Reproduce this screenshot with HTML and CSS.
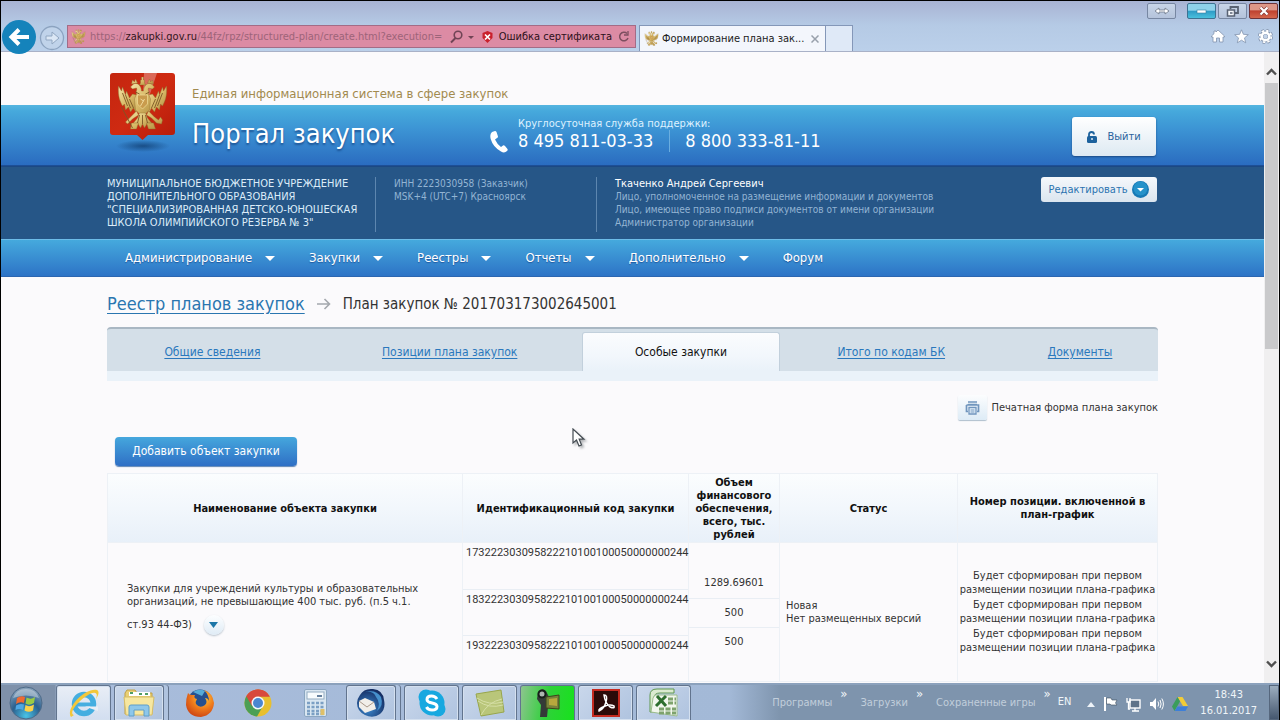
FILE: index.html
```html
<!DOCTYPE html>
<html lang="ru">
<head>
<meta charset="utf-8">
<title>Формирование плана закупок</title>
<link rel="stylesheet" href="styles.css">
</head>
<body>
<svg class="defs" width="0" height="0" aria-hidden="true">
  <defs>
    <linearGradient id="gold" x1="0" y1="0" x2="1" y2="1"><stop offset="0" stop-color="#f3e3a6"/><stop offset=".5" stop-color="#d9bb69"/><stop offset="1" stop-color="#b08a3c"/></linearGradient>
    <linearGradient id="red" x1="0" y1="0" x2="1" y2="1"><stop offset="0" stop-color="#c4260f"/><stop offset=".5" stop-color="#cf2a12"/><stop offset="1" stop-color="#b51c0a"/></linearGradient>
    <radialGradient id="orb" cx=".5" cy=".9" r=".9"><stop offset="0" stop-color="#49c3e6"/><stop offset=".5" stop-color="#2a608f"/><stop offset="1" stop-color="#8fa6bd"/></radialGradient>
    <radialGradient id="bird" cx=".4" cy=".7" r=".7"><stop offset="0" stop-color="#3c8ad0"/><stop offset="1" stop-color="#142c62"/></radialGradient>
    <radialGradient id="fox" cx=".6" cy=".3" r=".8"><stop offset="0" stop-color="#ffcf3a"/><stop offset=".5" stop-color="#ee7a1c"/><stop offset="1" stop-color="#c63a12"/></radialGradient>
    <radialGradient id="shade"><stop offset="0" stop-color="#103d70" stop-opacity=".75"/><stop offset="1" stop-color="#103d70" stop-opacity="0"/></radialGradient>
    <symbol id="eagle" viewBox="0 0 50 54">
      <g fill="url(#gold)" stroke="#8c6a2c" stroke-width=".4">
        <path d="M19 18 15 17 12 21 9 14 8 18 5 10 4 14 1 9C0 20 3 25 5 29L7 27 8 33 11 30 13 35 16 31 18 35 21 31Z"/>
        <path d="M31 18 35 17 38 21 41 14 42 18 45 10 46 14 49 9C50 20 47 25 45 29L43 27 42 33 39 30 37 35 34 31 32 35 29 31Z"/>
        <path d="M19 17C18 14 20 13 19 11L15 12 13 10 16 7C20 5 24 9 24 14L26 14C26 9 30 5 34 7L37 10 35 12 31 11C30 13 32 14 31 17L33 22 32 33 27 38 23 38 18 33 17 22Z"/>
        <path d="M22 36 28 36 30 41 35 47 30 46 27 51 25 47 23 51 20 46 15 47 20 41Z"/>
        <path d="M23 6V3H24V0H26V3H27V6L28 8H22ZM14 7 15 3 17 5 18 2 20 6ZM30 6 32 2 33 5 35 3 36 7Z"/>
        <path d="M19 34 12 41 8 45 10 47 15 42 21 38ZM31 34 37 40 41 43 43 40 45 43 44 47 39 46 34 41 29 38ZM14 46H21L19 52H13ZM29 46H36L38 52H31Z"/>
      </g>
      <path d="M20 18H30V27L25 32 20 27Z" fill="#c99b4d" stroke="#f0dc9a" stroke-width=".7"/>
      <path d="M5 16 10 29M8 18 13 31M12 22 16 31M45 16 40 29M42 18 37 31M38 22 34 31M22 38 20 46M25 38V47M28 38 30 46M4 30 15 51M18 15 22 17M32 15 28 17" stroke="#7b5726" stroke-width=".9" fill="none"/>
      <path d="m23 29 4-7M23 22l3 2" stroke="#fff0bb" stroke-width=".7"/>
    </symbol>
  </defs>
</svg>
<div class="desktop">
  <div class="browser">
    <header class="chrome">
      <div class="titlebar">
        <button class="win win-swap" aria-label="Переключить"><svg width="16" height="8" viewBox="0 0 16 8"><path d="M1 4 5 1V3H11V1L15 4 11 7V5H5V7Z" fill="#fff" stroke="#6c7788" stroke-width=".8"/></svg></button>
        <button class="win win-min" aria-label="Свернуть"><svg width="12" height="6" viewBox="0 0 12 6"><rect x="1" y="2" width="9" height="3" fill="#fff" stroke="#367d9e" stroke-width=".6"/></svg></button>
        <button class="win" aria-label="Развернуть"><svg width="13" height="11" viewBox="0 0 13 11"><path d="M4.500 3V1H12V7H9" fill="none" stroke="#586273" stroke-width="1.800"/><path d="M1.500 4H8.500V10H1.500Z" fill="#f4f7fb" stroke="#586273" stroke-width="1.500"/><path d="M4 7H6.500" stroke="#586273" stroke-width="1.500"/></svg></button>
        <button class="win win-close" aria-label="Закрыть"><svg width="10" height="10" viewBox="0 0 10 10"><path d="m1.500 1.500 7 7m0-7-7 7" stroke="#843a39" stroke-width="3.500"/><path d="m1.500 1.500 7 7m0-7-7 7" stroke="#fff" stroke-width="2.200"/></svg></button>
      </div>
      <div class="toolbar">
        <button class="back" aria-label="Назад"><svg width="34" height="34" viewBox="0 0 34 34"><circle cx="17" cy="17" r="17" fill="#1583bb"/><path d="M27 17H10M17 9.500 9.500 17 17 24.500" fill="none" stroke="#fff" stroke-width="4"/></svg></button>
        <button class="forward" aria-label="Вперёд"><svg width="26" height="26" viewBox="0 0 26 26"><circle cx="13" cy="13" r="11.500" fill="#c0d3ea" stroke="#8ca3c0" stroke-width="1.300"/><path d="M7 11H13V7L20 13 13 19V15H7Z" fill="#dbe7f5" stroke="#91a7c2"/></svg></button>
        <div class="address">
          <svg class="favicon" width="15" height="15"><use href="#eagle"/></svg>
          <span class="url">https://<b>zakupki.gov.ru</b>/44fz/rpz/structured-plan/create.html?execution=</span>
          <svg width="26" height="14" viewBox="0 0 26 14"><circle cx="8" cy="5" r="3.800" fill="none" stroke="#704455" stroke-width="1.600"/><path d="M5.500 8 1 12.500" stroke="#704455" stroke-width="2"/><path d="M18 6H24L21 9Z" fill="#704455"/></svg>
          <svg class="shield" width="11" height="12" viewBox="0 0 11 12"><path d="M5.500 0 10.500 2V7L5.500 12 .500 7V2Z" fill="#c9202c"/><path d="m3 3.500 5 5m0-5-5 5" stroke="#fff" stroke-width="1.700"/></svg>
          <span class="cert">Ошибка сертификата</span>
          <svg class="reload" width="12" height="12" viewBox="0 0 12 12"><path d="M9 2.500A4.300 4.300 0 1 0 10 7" fill="none" stroke="#7d4f60" stroke-width="1.500"/><path d="M10 0V4H6" fill="none" stroke="#7d4f60" stroke-width="1.300"/></svg>
        </div>
        <div class="tab">
          <svg width="15" height="15"><use href="#eagle"/></svg>
          <span class="tab-title">Формирование плана зак...</span>
          <button class="tab-close" aria-label="Закрыть вкладку"><svg width="8" height="8" viewBox="0 0 8 8"><path d="m.500.500 7 7m0-7-7 7" stroke="#98a0ab" stroke-width="1.500"/></svg></button>
        </div>
        <button class="newtab" aria-label="Новая вкладка"></button>
        <div class="tools">
          <button aria-label="Домой"><svg width="14" height="14" viewBox="0 0 14 14"><path d="M7 1 13.500 7V8H12V13H8.500V9H5.500V13H2V8H.500V7L3 4.700V2H5V3Z" fill="#fff" stroke="#8293ad" stroke-width=".8"/></svg></button>
          <button aria-label="Избранное"><svg width="15" height="15" viewBox="0 0 15 15"><path d="M7.500.800 9.400 5.300 14.300 5.700 10.500 8.900 11.700 13.800 7.500 11.200 3.300 13.800 4.500 8.900.700 5.700 5.600 5.300Z" fill="#fff" stroke="#8293ad" stroke-width=".8"/></svg></button>
          <button aria-label="Сервис"><svg width="15" height="15" viewBox="0 0 15 15"><circle cx="7.500" cy="7.500" r="6" fill="none" stroke="#8293ad" stroke-width="3" stroke-dasharray="2.600 2.112"/><circle cx="7.500" cy="7.500" r="4" fill="none" stroke="#8293ad" stroke-width="4.200"/><circle cx="7.500" cy="7.500" r="5.800" fill="none" stroke="#fff" stroke-width="1.800" stroke-dasharray="2.400 2.155"/><circle cx="7.500" cy="7.500" r="3.800" fill="none" stroke="#fff" stroke-width="2.600"/><circle cx="7.500" cy="7.500" r="1.900" fill="#c3d3e8"/></svg></button>
        </div>
      </div>
    </header>

    <div class="viewport">
      <main class="page">
        <div class="masthead">
          <div class="wrap brand">
            <svg class="logo" width="71" height="82" viewBox="0 0 71 82"><ellipse cx="36" cy="74" rx="27" ry="6" fill="url(#shade)"/><path d="M6 1H65Q68 1 68 4V60Q68 63 65 63H41L35.500 68 30 63H6Q3 63 3 60V4Q3 1 6 1Z" fill="url(#red)"/><path d="M37 1H50L40 31 36 26Z" fill="#fff" opacity=".3"/><use href="#eagle" x="10" y="5" width="51" height="54"/></svg>
            <div class="names">
              <p class="system">Единая информационная система в сфере закупок</p>
              <p class="portal">Портал закупок</p>
            </div>
            <div class="support">
              <svg class="phone" width="18" height="22" viewBox="0 0 18 22"><path d="M2 1 5 0Q6 0 6.500 1L8 5.500Q8 6.500 7 7L5 8.500Q7 13 11 16L13 14.500Q14 14 15 15L17.500 18Q18 19 17 20 14.500 22.500 11 20.500 3 16 .700 8-.500 3 2 1Z" fill="#fff"/></svg>
              <div>
                <p class="support-label">Круглосуточная служба поддержки:</p>
                <p class="numbers"><span>8 495 811-03-33</span><span>8 800 333-81-11</span></p>
              </div>
            </div>
            <button class="logout"><svg width="10" height="12" viewBox="0 0 10 12"><rect y="5" width="10" height="7" rx="1.500" fill="#1d629d"/><path d="M2 6V3.500Q2 1 4.500 1T7 3.500" fill="none" stroke="#1d629d" stroke-width="1.800"/><circle cx="5" cy="8" r="1" fill="#dceaf5"/></svg>Выйти</button>
          </div>
        </div>

        <section class="org">
          <div class="wrap org-row">
            <p class="org-name">МУНИЦИПАЛЬНОЕ БЮДЖЕТНОЕ УЧРЕЖДЕНИЕ<br>ДОПОЛНИТЕЛЬНОГО ОБРАЗОВАНИЯ<br>"СПЕЦИАЛИЗИРОВАННАЯ ДЕТСКО-ЮНОШЕСКАЯ<br>ШКОЛА ОЛИМПИЙСКОГО РЕЗЕРВА № 3"</p>
            <p class="org-inn">ИНН 2223030958 (Заказчик)<br>MSK+4 (UTC+7) Красноярск</p>
            <div class="person">
              <p class="person-name">Ткаченко Андрей Сергеевич</p>
              <p>Лицо, уполномоченное на размещение информации и документов</p>
              <p>Лицо, имеющее право подписи документов от имени организации</p>
              <p>Администратор организации</p>
            </div>
            <button class="edit">Редактировать<svg width="17" height="17" viewBox="0 0 17 17"><circle cx="8.500" cy="8.500" r="8.500" fill="#1779b5"/><circle cx="8.500" cy="7.500" r="7" fill="#2592ca"/><path d="M5 7H12L8.500 10.500Z" fill="#fff"/></svg></button>
          </div>
        </section>

        <nav class="menu">
          <div class="wrap menu-row">
            <a class="drop" href="#">Администрирование</a>
            <a class="drop" href="#">Закупки</a>
            <a class="drop" href="#">Реестры</a>
            <a class="drop" href="#">Отчеты</a>
            <a class="drop" href="#">Дополнительно</a>
            <a href="#">Форум</a>
          </div>
        </nav>

        <div class="wrap content">
          <div class="crumbs">
            <a href="#">Реестр планов закупок</a>
            <svg width="14" height="12" viewBox="0 0 14 12"><path d="M0 6H12M7.500 1 12.500 6 7.500 11" fill="none" stroke="#a4a8ad" stroke-width="1.600"/></svg>
            <h1>План закупок № 201703173002645001</h1>
          </div>

          <nav class="tabs">
            <a class="t1" href="#">Общие сведения</a>
            <a class="t2" href="#">Позиции плана закупок</a>
            <a class="t3 active" href="#" aria-current="page">Особые закупки</a>
            <a class="t4" href="#">Итого по кодам БК</a>
            <a class="t5" href="#">Документы</a>
          </nav>

          <div class="print">
            <button id="print" class="print-btn" aria-labelledby="print-text"><svg width="15" height="14" viewBox="0 0 15 14"><path d="M3 1H12M1.500 4H13.500V10.500H12M3 10.500H1.500V4M3 3.500H12" fill="none" stroke="#7095bd" stroke-width="1.700"/><path d="M4 6.500H11V13H4Z" fill="#e8f3fc" stroke="#7095bd" stroke-width="1.300"/><path d="M5.500 9H9.500M5.500 11H9.500" stroke="#7095bd"/></svg></button>
            <label id="print-text" for="print">Печатная форма плана закупок</label>
          </div>

          <button class="add">Добавить объект закупки</button>

          <table class="grid">
            <colgroup><col class="c-name"><col class="c-id"><col class="c-sum"><col class="c-status"><col class="c-pos"></colgroup>
            <thead>
              <tr>
                <th>Наименование объекта закупки</th>
                <th>Идентификационный код закупки</th>
                <th>Объем финансового обеспечения, всего, тыс. рублей</th>
                <th>Статус</th>
                <th>Номер позиции. включенной в план-график</th>
              </tr>
            </thead>
            <tbody>
              <tr>
                <td class="name">Закупки для учреждений культуры и образовательных<br>организаций, не превышающие 400 тыс. руб. (п.5 ч.1.
                  <div class="name-tail">ст.93 44-ФЗ)<button class="more" aria-label="Развернуть"><svg width="9" height="6" viewBox="0 0 9 6"><path d="M0 0H9L4.500 6Z" fill="#1b76a8"/></svg></button></div></td>
                <td class="ids"><div>173222303095822210100100050000000244</div><div>183222303095822210100100050000000244</div><div>193222303095822210100100050000000244</div></td>
                <td class="sums"><div>1289.69601</div><div>500</div><div>500</div></td>
                <td class="status">Новая<br>Нет размещенных версий</td>
                <td class="pos"><div>Будет сформирован при первом размещении позиции плана-графика</div><div>Будет сформирован при первом размещении позиции плана-графика</div><div>Будет сформирован при первом размещении позиции плана-графика</div></td>
              </tr>
            </tbody>
          </table>
        </div>
      </main>
      <div class="scroll" aria-hidden="true">
        <span class="scroll-btn"><svg width="11" height="8" viewBox="0 0 11 8"><path d="M1 6.500 5.500 2 10 6.500" fill="none" stroke="#505050" stroke-width="2.400"/></svg></span>
        <span class="thumb"></span>
        <span class="track"></span>
        <span class="scroll-btn low"><svg width="11" height="8" viewBox="0 0 11 8"><path d="M1 1.500 5.500 6 10 1.500" fill="none" stroke="#505050" stroke-width="2.400"/></svg></span>
      </div>
    </div>
  </div>

  <footer class="taskbar">
    <button class="start" aria-label="Пуск"><svg width="34" height="34" viewBox="0 0 34 34"><circle cx="17" cy="17" r="16" fill="url(#orb)" stroke="#4d6a88"/><path d="M8 12Q12 9 16 11L15 17Q11 15 7 18Z" fill="#ee6a32"/><path d="M17.500 11.500Q22 14 26 11L25 17Q20 20 16.500 17.500Z" fill="#9acb45"/><path d="M7 19.500Q11 17 15 18.500L14 24Q10 22 6.500 24Z" fill="#4fa8e4"/><path d="M16.500 19Q20 21.500 25 18.500L24 24.500Q20 27 15.500 24.500Z" fill="#fbd14a"/><path d="M4 12Q7 3 17 3T30 12Q17 7 4 12Z" fill="#fff" opacity=".35"/></svg></button>
    <div class="slots">
      <button class="slot open lit" aria-label="Internet Explorer"><svg width="32" height="32" viewBox="0 0 32 32"><circle cx="16" cy="17" r="9.500" fill="none" stroke="#45aee0" stroke-width="5.500"/><path d="M8 17.500H27" stroke="#45aee0" stroke-width="4"/><path d="M17 19.500H30V24L24 22Z" fill="#e9eef5"/><path d="M3 30C-3 22 17 0 29 3 32 5 30 9 28 12 31 4 25 4 17 10 7 17 1 27 6 28Z" fill="#f3c73a"/></svg></button>
      <button class="slot open stack" aria-label="Проводник"><svg width="32" height="30" viewBox="0 0 32 30"><path d="M2 5 4 2H12L14 5H29V26H2Z" fill="#e9cf74" stroke="#bfa049"/><path d="M6 4H27V8H6Z" fill="#fff"/><path d="M7 5H10M16 6H19M22 6H25" stroke="#509d66" stroke-width="2"/><path d="M1 9H31L29 27H3Z" fill="#f6e7a0" stroke="#d6bd68"/><path d="M6 28V19Q6 17 8 17H24Q26 17 26 19V28H21V22H11V28Z" fill="#8dc7ea" stroke="#5e9ec9"/></svg></button>
      <button class="slot" aria-label="Firefox"><svg width="30" height="30" viewBox="0 0 30 30"><circle cx="15" cy="14" r="12.500" fill="#25508f"/><path d="M8 4Q14 0 20 3L17 8Z" fill="#56acd8"/><path d="M3 5Q4 7 7 7L10 7Q8 10 12 11 10 14 11 16 15 21 20 17 23 14 20 10 23 10 24 13 24 7 19 2 28 5 29 15 28 27 16 29 3 29 1 17 1 10 3 5Z" fill="url(#fox)"/></svg></button>
      <button class="slot" aria-label="Chrome"><svg width="28" height="28" viewBox="0 0 28 28"><circle cx="14" cy="14" r="13.500" fill="#e8bf2e"/><path d="M14 14 2.300 7.200A13.500 13.500 0 0 1 25.700 7.500L14 7.500Z" fill="#d8493c"/><path d="M14 14 2.300 7.200A13.500 13.500 0 0 0 13 27.500L19 17Z" fill="#4b9f55"/><path d="M14 7.500H25.700A13.500 13.500 0 0 0 2.300 7.200L8 17Z" fill="#d8493c"/><circle cx="14" cy="14" r="6.500" fill="#f6f7f9"/><circle cx="14" cy="14" r="5" fill="#4b86d0"/></svg></button>
      <button class="slot" aria-label="Калькулятор"><svg width="23" height="28" viewBox="0 0 23 28"><rect x=".500" y=".500" width="22" height="27" rx="1.500" fill="#d9e6f1" stroke="#8ba6c1"/><rect x="3" y="3" width="17" height="7" fill="#f7fbfd" stroke="#93abc1"/><path d="M13 7H18" stroke="#66819e" stroke-width="2"/><path d="M3 14H20M3 18H20M3 22H20M3 25H20" stroke="#7b9fc4" stroke-width="2.400" stroke-dasharray="3 1.500"/><rect x="16.500" y="20" width="4" height="6" fill="#dfc069"/></svg></button>
      <button class="slot open stack" aria-label="Thunderbird"><svg width="30" height="30" viewBox="0 0 30 30"><path d="M4 7Q8 0 17 1 27 2 28 12 30 21 24 26 17 31 9 27 1 23 1 15 1 11 4 7Z" fill="url(#bird)"/><path d="M3 13 9 10 18 14 20 21 9 25 3 19Z" fill="#f1eee9"/><path d="m3 13 8 6 7-5" fill="none" stroke="#a9988a"/><path d="M9 4Q18 3 20 9 25 15 21 23 28 18 25 9 20 1 9 4Z" fill="#4590cc"/></svg></button>
      <button class="slot open" aria-label="Skype"><svg width="30" height="30" viewBox="0 0 30 30"><circle cx="15" cy="15" r="12.500" fill="#17a8e0"/><circle cx="9" cy="9" r="7.500" fill="#17a8e0"/><circle cx="21" cy="21" r="7.500" fill="#17a8e0"/><path d="M20 11Q18 8 14.500 8 10 8 10 11.500 10 14 15 15T20 18.500Q20 22 15 22 11 22 9.500 19" fill="none" stroke="#fff" stroke-width="3"/></svg></button>
      <button class="slot open" aria-label="Просмотр"><svg width="30" height="28" viewBox="0 0 30 28"><path d="M1 5 26 1 29 23 6 27Z" fill="#b9c67a" stroke="#98a64b"/><path d="M2 9Q14 17 28 13M3 12Q14 20 28 16M6 26Q13 13 27 10" fill="none" stroke="#d6dfa6" stroke-width="1"/></svg></button>
      <button class="slot open green" aria-label="Запись"><svg width="28" height="30" viewBox="0 0 28 30"><path d="M4 4Q8-1 12 3L15 9 13 29H6L7 17 3 11Z" fill="#343b38"/><circle cx="8" cy="6" r="3.500" fill="#aeb5b1" stroke="#171d1a" stroke-width="2"/><path d="M12 9 25 7V21L12 20Z" fill="#77813a" stroke="#3d441c"/><path d="M15 11 23 10V18L15 17Z" fill="#b7a83d"/></svg></button>
      <button class="slot open" aria-label="Adobe Reader"><svg width="28" height="28" viewBox="0 0 28 28"><path d="M1 1H27V27H1Z" fill="#2b0b09" stroke="#c42a20" stroke-width="2"/><path d="M12 6Q16 6 14 13 12 20 7 22 6 20 12 17.500 18 15 22 17 23 20 18 18 13 14 12 6Z" fill="none" stroke="#fff" stroke-width="1.500"/></svg></button>
      <button class="slot open" aria-label="Excel"><svg width="32" height="30" viewBox="0 0 32 30"><path d="M2 24V7Q2 1 9 1H26V5H12Q6 5 6 10V24Z" fill="#dbead0" stroke="#5e984f"/><path d="M7 7H29V28L3 24 5 10Z" fill="#f2f6ed" stroke="#9cbd8c"/><path d="M20 11H28M20 15H28M11 21H28M11 25H28" stroke="#7da26c" stroke-width="3" stroke-dasharray="5 1.500"/><path d="m9 8 9 10M18 8 8 18" stroke="#2e6e2e" stroke-width="3"/></svg></button>
    </div>
    <div class="links">
      <a href="#">Программы</a><span class="chev">»</span>
      <a href="#">Загрузки</a><span class="chev">»</span>
      <a href="#">Сохраненные игры</a><span class="chev">»</span>
    </div>
    <div class="tray">
      <span class="lang">EN</span>
      <svg width="8" height="5" viewBox="0 0 8 5"><path d="M4 0 8 5H0Z" fill="#eef3f8"/></svg>
      <svg width="15" height="16" viewBox="0 0 15 16"><path d="M2 1V15" stroke="#fff" stroke-width="2"/><path d="M3.500 2H8L9 4H14L12.500 7 14 9H8L7 8H3.500Z" fill="#fff" stroke="#3b4a5a" stroke-width=".6"/></svg>
      <svg width="15" height="15" viewBox="0 0 15 15"><rect x="4" y="3" width="10" height="8" fill="#5f7389" stroke="#fff" stroke-width="1.400"/><path d="M9 11V14M6 14H13M1 1V5H4V1M2.500 5V12H4" stroke="#fff" stroke-width="1.300" fill="none"/></svg>
      <svg width="15" height="14" viewBox="0 0 15 14"><path d="M1 5H3.500L7 1V13L3.500 9H1Z" fill="#fff"/><path d="M9 4.500Q10.500 7 9 9.500M11 3Q13.200 7 11 11M12.800 1.500Q16 7 12.800 12.500" fill="none" stroke="#fff"/></svg>
      <svg width="16" height="14" viewBox="0 0 16 14"><path d="M5.500 0H10.500L16 9H11Z" fill="#f2cc38"/><path d="M5.500 0 8 4.500 2.500 14 0 9.500Z" fill="#3b9d5b"/><path d="M5.300 9.500H16L13.500 14H2.700Z" fill="#3d7fd9"/></svg>
    </div>
    <time class="clock">18:43<br>16.01.2017</time>
    <button class="show" aria-label="Показать рабочий стол"></button>
  </footer>
  <svg class="cursor" width="14" height="20" viewBox="0 0 14 20"><path d="M1 1V15L4.500 12 7 18 9.500 17 7.200 11.200H12Z" fill="#fff" stroke="#444b52" stroke-width="1.200"/></svg>
</div>
</body>
</html>
```
FILE: styles.css
```css
* { box-sizing: border-box; }
body {
  margin: 0;
  font-family: "DejaVu Sans Condensed", "Noto Sans", sans-serif;
  font-size: 11px;
  line-height: 13px;
  color: #333;
}
p, h1 { margin: 0; font-weight: normal; }
button { font: inherit; padding: 0; border: 0; background: none; display: flex; align-items: center; justify-content: center; }
svg { display: block; flex: none; }
.defs { position: absolute; }

.desktop {
  position: relative;
  height: 100vh;
  display: flex;
  flex-direction: column;
  border: solid #000;
  border-width: 1px 1px 0;
  overflow: hidden;
}
.browser { flex: 1; min-height: 0; display: flex; flex-direction: column; }

/* Browser chrome */
.chrome { background: linear-gradient(#a8b3d3, #b5cae5 24px, #bbd0ea); border-bottom: 1px solid #a9b1c7; }
.titlebar { display: flex; justify-content: flex-end; gap: 2px; height: 24px; padding: 2px 1px 0 0; }
.win { width: 29px; height: 16px; border: 1px solid #7787a2; border-radius: 2px; background: linear-gradient(#c8d5e8, #b4c3db); }
.win-swap { margin-right: 9px; }
.win-min { border-color: #3d7291; background: linear-gradient(#8ed2ea 45%, #2e9ac5 50%, #49c0dd); }
.win-close { border-color: #6e3338; background: linear-gradient(#dd9788 40%, #bf4230 50%, #d4664d); }
.toolbar { display: flex; align-items: stretch; height: 26px; padding-left: 1px; }
.back { margin: -6px 0 -4px; z-index: 1; }
.forward { width: 26px; margin: 0 2px 0 3px; }
.address {
  width: 569px;
  margin-bottom: 3px;
  padding: 0 5px 0 3px;
  display: flex;
  align-items: center;
  gap: 4px;
  background: #dc8ba4;
  border: 1px solid #a36c86;
}
.url { flex: 1; min-width: 0; overflow: hidden; white-space: nowrap; color: #9c6479; }
.url b { font-weight: normal; color: #321720; }
.shield { margin-left: 2px; }
.cert { color: #2c1019; margin: 0 2px; white-space: nowrap; }
.tab {
  width: 187px;
  margin-left: 3px;
  padding: 0 6px 0 4px;
  display: flex;
  align-items: center;
  gap: 3px;
  background: #f3f6fc;
  border: 1px solid #8497b8;
  border-bottom: 0;
}
.tab-title { flex: 1; color: #222; white-space: nowrap; }
.newtab { width: 27px; background: #dfe9f7; border: solid #8497b8; border-width: 1px 1px 0 0; }
.tools { margin-left: auto; padding-right: 6px; padding-bottom: 4px; display: flex; align-items: center; gap: 9px; }

/* Page area and scrollbar */
.viewport { flex: 1; min-height: 0; display: flex; background: #fbfafc; }
.page { flex: 1; min-width: 0; overflow: hidden; }
.scroll { width: 15px; display: flex; flex-direction: column; background: #f0eff0; }
.scroll-btn { height: 31px; display: flex; justify-content: center; align-items: flex-end; padding-bottom: 7px; }
.thumb { flex: 266; margin: 0 1px; background: #c9c9cb; }
.track { flex: 303; }
.scroll-btn.low { padding-bottom: 15px; }
.wrap { width: 100%; max-width: 1051px; margin: 0 auto; }

/* Masthead */
.masthead { background: linear-gradient(#55b5e0, #46a9dc 6px, #3c94d4 40%, #2a6cc0) bottom / 100% 60px no-repeat; border-bottom: 1px solid #1d4f96; }
.brand { display: flex; height: 113px; padding-top: 20px; }
.names { margin-left: 14px; width: 298px; white-space: nowrap; }
.system { font-size: 13px; line-height: 16px; padding-top: 14px; color: #a28a4f; }
.portal { font-size: 27px; line-height: 32px; margin-top: 16px; color: #fff; text-shadow: 0 2px 2px #1d5597; }
.support { display: flex; align-items: flex-start; gap: 10px; color: #fff; padding-top: 45px; white-space: nowrap; }
.phone { margin-top: 14px; }
.numbers { display: flex; font-size: 18px; line-height: 22px; color: #fff; }
.numbers span + span { margin-left: 16px; padding-left: 15px; border-left: 1px solid #6aaee0; }
.support-label { color: #ddf1ff; }
.logout {
  margin: 45px 2px 0 auto;
  width: 84px;
  height: 39px;
  gap: 10px;
  border-radius: 3px;
  background: linear-gradient(#fff, #dde9f2);
  box-shadow: 0 1px 2px #1a4884;
  color: #2a639d;
}

/* Organisation strip */
.org { background: #265687; border-top: 1px solid #1c4883; }
.org-row { display: flex; align-items: flex-start; height: 72px; padding: 10px 0 7px; color: #93b4d3; font-size: 10px; line-height: 13px; white-space: nowrap; }
.org-name { width: 269px; height: 55px; font-size: 11px; color: #dcecf9; border-right: 1px solid #5d86af; }
.org-inn { width: 221px; height: 55px; padding-left: 18px; border-right: 1px solid #5d86af; }
.person { padding-left: 18px; }
.person-name { font-size: 11px; color: #fff; }
.edit {
  margin: 0 1px 0 auto;
  width: 116px;
  height: 25px;
  gap: 5px;
  font-size: 11px;
  border-radius: 3px;
  background: linear-gradient(#f5f8fb, #dbe5ef);
  color: #2a73b0;
}

/* Main menu */
.menu { background: linear-gradient(#45a9dd, #2d73c6); border-top: 1px solid #6dbce8; border-bottom: 1px solid #2c66b0; }
.menu-row { display: flex; align-items: center; gap: 34px; height: 36px; padding-left: 18px; font-size: 13px; line-height: 16px; }
.menu a { color: #fff; text-decoration: none; text-shadow: 0 1px 1px #20599f; display: flex; align-items: center; gap: 13px; }
.drop::after { content: ""; border: solid transparent; border-width: 5px 5px 0; border-top-color: #fff; }

/* Content */
.crumbs { display: flex; align-items: center; gap: 12px; height: 50px; padding-top: 4px; }
.crumbs a { font-size: 18px; line-height: 22px; color: #2a76b0; text-underline-offset: 3px; }
.crumbs h1 { font-size: 15px; line-height: 20px; color: #333; }
.tabs {
  display: flex;
  height: 54px;
  padding-bottom: 10px;
  font-size: 12px;
  background: linear-gradient(#d4dfe8, #d4dfe8) top / 100% 42px no-repeat, #eaf2f9;
  border-top: 2px solid #a9b7c3;
  border-radius: 4px 4px 0 0;
}
.tabs a { display: flex; align-items: center; justify-content: center; padding-top: 4px; color: #2a78bd; text-underline-offset: 2px; white-space: nowrap; }
.t1 { flex: 211; }
.t2 { flex: 264; }
.t3 { flex: 197; }
.t4 { flex: 222; }
.t5 { flex: 156; }
.tabs .active { margin-top: 3px; padding-top: 1px; background: linear-gradient(#fbfcfe, #f2f7fc 60%, #eaf2f9); border: 1px solid #c2d0dc; border-width: 1px 1px 0; border-radius: 3px 3px 0 0; color: #111; text-decoration: none; }
.print { display: flex; justify-content: flex-end; align-items: center; gap: 4px; margin-top: 14px; white-space: nowrap; }
.print-btn { width: 29px; height: 25px; border-radius: 2px; background: linear-gradient(#fcfdfe, #ddebf6); box-shadow: 0 1px 1px #aebecd; }
.add {
  margin: 17px 0 7px 8px;
  width: 182px;
  height: 29px;
  border-radius: 4px;
  font-size: 12px;
  color: #fff;
  background: linear-gradient(#45a7dd, #2f6fc5);
  box-shadow: 0 1px 1px #5d84b4;
}

/* Purchases table */
.grid { width: 100%; table-layout: fixed; border-collapse: collapse; line-height: 14px; }
.grid th, .grid td { border: 1px solid #edf1f6; padding: 0; }
.grid th { height: 69px; padding: 0 3px; line-height: 13px; color: #111; text-align: center; }
.grid thead tr { background: linear-gradient(#fbfdfe, #f2f7fc 50%, #e8f0f9); }
.c-name { width: 355px; }
.c-id { width: 226px; }
.c-sum { width: 91px; }
.c-status { width: 178px; }
.grid .name { padding: 0 0 8px 19px; white-space: nowrap; line-height: 13px; }
.name-tail { display: flex; align-items: center; gap: 12px; padding-top: 7px; }
.more { width: 20px; height: 20px; border-radius: 50%; background: linear-gradient(#fdfeff, #dfebf5); box-shadow: 0 1px 2px #b4bfca; }
.ids { font-family: Roboto, "DejaVu Sans Condensed", sans-serif; }
.ids div { height: 46px; padding: 3px 0 0 3px; white-space: nowrap; }
.ids div + div, .sums div + div { border-top: 1px solid #e9eef4; }
.sums, .pos { text-align: center; }
.sums div { height: 29px; padding-top: 7px; }
.grid .status { padding-left: 6px; white-space: nowrap; line-height: 13px; }
.pos div { min-height: 29px; }

/* Taskbar */
.taskbar { display: flex; height: 37px; background: linear-gradient(90deg, #7f91aa 54px, #a8bcdb 56px, #a3b9d7 57%, #7e94ad 61%); border-top: 2px solid #8ba1bc; color: #f0f4f8; white-space: nowrap; }
.start { width: 34px; margin: 0 12px 0 8px; }
.slots { display: flex; }
.slot { width: 55px; margin: 0 2px 0 1px; }
.open { border: 1px solid #62748e; border-bottom: 0; border-radius: 3px 3px 0 0; background: linear-gradient(135deg, #c9d7eb, #afc3df); box-shadow: inset 0 0 0 1px #d4e0ef; }
.lit { background: linear-gradient(#e9eef6, #d2def0); }
.stack { width: 50px; margin-right: 7px; box-shadow: 4px 0 #afc3df, 5px 0 #62748e, inset 0 0 0 1px #d4e0ef; }
.green { background: linear-gradient(100deg, #8ec48f, #2fd13a 50%, #17e21c); box-shadow: none; }
.links { margin-left: auto; display: flex; align-items: center; gap: 8px; }
.links a { color: #c1cedb; text-decoration: none; }
.chev { font-size: 13px; margin: 0 5px 18px 0; }
.tray { display: flex; align-items: center; gap: 8px; margin-left: 2px; padding-top: 3px; }
.lang { margin: 0 8px 6px 0; }
.clock { margin: 2px 12px 0; text-align: center; line-height: 16px; }
.show { width: 10px; border: 1px solid #56677d; background: linear-gradient(#9cadbe, #45576f); }

/* Pointer over the page */
.cursor { position: absolute; left: 571px; top: 427px; filter: drop-shadow(2px 2px 1px #b4b6b9); }
```
